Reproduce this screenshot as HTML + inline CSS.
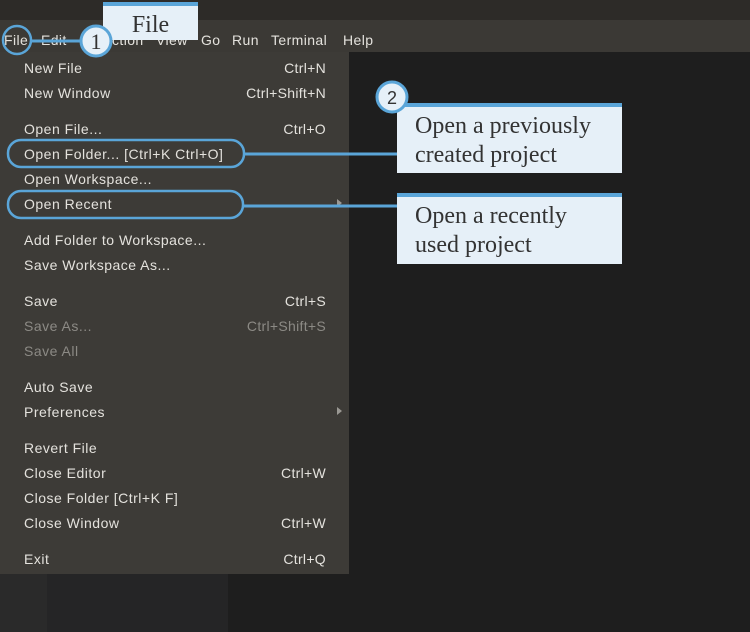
<!DOCTYPE html>
<html><head><style>
body{margin:0;width:750px;height:632px;overflow:hidden;background:#1e1e1e;font-family:"Liberation Sans",sans-serif;position:relative}
.a{position:absolute}
.mi{position:absolute;left:24px;font-size:14px;color:#e4e2dd;line-height:16px;letter-spacing:0.5px}
.sc{position:absolute;right:424px;font-size:14px;color:#e4e2dd;line-height:16px;text-align:right;letter-spacing:0.3px}
.dis{color:#8c8a85}
.mb{position:absolute;top:32px;font-size:14px;color:#e4e2dd;letter-spacing:0.4px}
.box{position:absolute;background:#e6f0f8;border-top:4px solid #5aa5d8;font-family:"Liberation Serif",serif;color:#333;font-size:24px;line-height:29px}
</style></head><body>
<div class="a" style="left:0;top:0;width:750px;height:20px;background:#2d2b28"></div>
<div class="a" style="left:0;top:20px;width:750px;height:32px;background:#3b3935"></div>
<div class="a" style="left:0;top:52px;width:47px;height:580px;background:#2a2a2a"></div>
<div class="a" style="left:47px;top:52px;width:181px;height:580px;background:#252526"></div>
<div class="mb" style="left:4px">File</div>
<div class="mb" style="left:41px">Edit</div>
<div class="mb" style="left:112px">ction</div>
<div class="mb" style="left:156px">View</div>
<div class="mb" style="left:201px">Go</div>
<div class="mb" style="left:232px">Run</div>
<div class="mb" style="left:271px">Terminal</div>
<div class="mb" style="left:343px">Help</div>
<div class="a" style="left:0;top:52px;width:349px;height:522px;background:#3d3b37"></div>
<div class="mi" style="top:60px">New File</div><div class="sc" style="top:60px">Ctrl+N</div>
<div class="mi" style="top:85px">New Window</div><div class="sc" style="top:85px">Ctrl+Shift+N</div>
<div class="mi" style="top:121px">Open File...</div><div class="sc" style="top:121px">Ctrl+O</div>
<div class="mi" style="top:146px">Open Folder... [Ctrl+K Ctrl+O]</div>
<div class="mi" style="top:171px">Open Workspace...</div>
<div class="mi" style="top:196px">Open Recent</div>
<div class="mi" style="top:232px">Add Folder to Workspace...</div>
<div class="mi" style="top:257px">Save Workspace As...</div>
<div class="mi" style="top:293px">Save</div><div class="sc" style="top:293px">Ctrl+S</div>
<div class="mi dis" style="top:318px">Save As...</div><div class="sc dis" style="top:318px">Ctrl+Shift+S</div>
<div class="mi dis" style="top:343px">Save All</div>
<div class="mi" style="top:379px">Auto Save</div>
<div class="mi" style="top:404px">Preferences</div>
<div class="mi" style="top:440px">Revert File</div>
<div class="mi" style="top:465px">Close Editor</div><div class="sc" style="top:465px">Ctrl+W</div>
<div class="mi" style="top:490px">Close Folder [Ctrl+K F]</div>
<div class="mi" style="top:515px">Close Window</div><div class="sc" style="top:515px">Ctrl+W</div>
<div class="mi" style="top:551px">Exit</div><div class="sc" style="top:551px">Ctrl+Q</div>
<svg class="a" style="left:0;top:0" width="750" height="632">
<polygon points="337,199 342,203 337,207" fill="#9a9893"/>
<polygon points="337,407 342,411 337,415" fill="#9a9893"/>
<line x1="30" y1="41" x2="82" y2="41" stroke="#5aa5d8" stroke-width="3"/>
<circle cx="17" cy="40" r="14" fill="none" stroke="#5aa5d8" stroke-width="2.5"/>
<rect x="8" y="140" width="236" height="27" rx="13" fill="none" stroke="#5aa5d8" stroke-width="2.5"/>
<rect x="8" y="191" width="235" height="27" rx="13" fill="none" stroke="#5aa5d8" stroke-width="2.5"/>
<line x1="244" y1="154" x2="398" y2="154" stroke="#5aa5d8" stroke-width="3"/>
<line x1="243" y1="206" x2="398" y2="206" stroke="#5aa5d8" stroke-width="3"/>
</svg>
<div class="box" style="left:103px;top:2px;width:95px;height:34px;text-align:center;line-height:38px">File</div>
<div class="box" style="left:397px;top:103px;width:207px;padding-left:18px;padding-top:5px;height:61px">Open a previously<br>created project</div>
<div class="box" style="left:397px;top:193px;width:207px;padding-left:18px;padding-top:5px;height:62px">Open a recently<br>used project</div>
<svg class="a" style="left:0;top:0" width="750" height="632">
<circle cx="96" cy="41" r="15" fill="#e6f0f8" stroke="#5aa5d8" stroke-width="3"/>
<text x="96" y="49" text-anchor="middle" font-family="Liberation Serif" font-size="22" fill="#333">1</text>
<circle cx="392" cy="97" r="15" fill="#e6f0f8" stroke="#5aa5d8" stroke-width="3"/>
<text x="392" y="104" text-anchor="middle" font-family="Liberation Sans" font-size="18" fill="#333">2</text>
</svg>
</body></html>
